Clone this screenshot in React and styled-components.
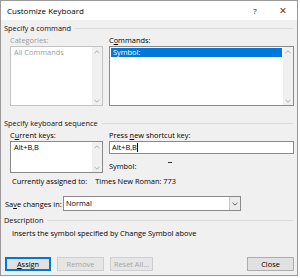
import React from 'react';
import styled, { createGlobalStyle } from 'styled-components';

const GlobalStyle = createGlobalStyle`
  html, body {
    margin: 0;
    padding: 0;
    background: #ffffff;
  }
  body {
    font-family: "Open Sans", "Noto Sans", sans-serif;
    font-size: 7.4px;
    color: #000;
  }
  * {
    box-sizing: border-box;
  }
`;

const Window = styled.div`
  width: 298px;
  height: 276px;
  border: 1px solid #9a9a9a;
  background: #f0f0f0;
  display: flex;
  flex-direction: column;
`;

const TitleBar = styled.div`
  height: 19px;
  background: #ffffff;
  display: flex;
  align-items: center;
  padding-left: 6px;
`;

const Title = styled.div`
  flex: 1;
  font-size: 8px;
  color: #000;
`;

const TitleButton = styled.div`
  width: 28px;
  text-align: center;
  font-size: ${props => props.big ? '12px' : '8px'};
  color: #222;
`;

const Body = styled.div`
  flex: 1;
  display: flex;
  flex-direction: column;
  padding: 0 3px 0 3px;
`;

const GroupHeader = styled.div`
  display: flex;
  align-items: center;
  gap: 4px;
  height: 10px;
  line-height: 10px;
  margin-top: ${props => props.top}px;
  padding-right: 1px;
  white-space: nowrap;
  color: #111;

  &::after {
    content: '';
    flex: 1;
    border-top: 1px solid #dadada;
  }
`;

const Columns = styled.div`
  display: flex;
  gap: 6px;
  padding-left: 6px;
  margin-top: ${props => props.top}px;
`;

const LeftColumn = styled.div`
  width: 93px;
  display: flex;
  flex-direction: column;
`;

const RightColumn = styled.div`
  flex: 1;
  display: flex;
  flex-direction: column;
`;

const Label = styled.div`
  height: 10px;
  line-height: 10px;
  color: ${props => props.disabled ? '#9d9d9d' : '#000'};
  margin-bottom: 1px;
  white-space: nowrap;

  u {
    text-decoration: underline;
    text-underline-offset: 1px;
  }
`;

const ListBox = styled.div`
  height: ${props => props.h}px;
  border: 1px solid ${props => props.disabled ? '#c4c4c4' : '#8a8a8a'};
  background: #ffffff;
  display: flex;
`;

const ListItems = styled.div`
  flex: 1;
  padding: 1px 1px;
`;

const ListItem = styled.div`
  height: 9px;
  line-height: 9px;
  padding-left: 2px;
  color: ${props => props.disabled ? '#9d9d9d' : props.selected ? '#fff' : '#000'};
  background: ${props => props.selected ? '#0078d7' : 'transparent'};
`;

const ScrollTrack = styled.div`
  width: 10px;
  background: #f0f0f0;
  display: flex;
  flex-direction: column;
  justify-content: space-between;
  align-items: center;
  padding: 3px 0 2px;
`;

const TextInput = styled.div`
  height: 13px;
  border: 1px solid #8a8a8a;
  background: #fff;
  line-height: 11px;
  padding-left: 2px;
  display: flex;
  align-items: center;
`;

const Caret = styled.span`
  display: inline-block;
  width: 1px;
  height: 9px;
  background: #000;
`;

const SymbolRow = styled.div`
  display: flex;
  align-items: flex-start;
  margin-top: 7px;
  height: 10px;
  line-height: 10px;
`;

const SymbolGlyph = styled.span`
  display: inline-block;
  width: 4px;
  height: 1px;
  background: #333;
  margin-left: 32px;
  margin-top: 1px;
`;

const InfoLine = styled.div`
  height: 10px;
  line-height: 10px;
  padding-left: 8px;
  margin-top: ${props => props.top}px;
  white-space: nowrap;
`;

const Gap = styled.span`
  display: inline-block;
  width: 8px;
`;

const SaveRow = styled.div`
  display: flex;
  align-items: center;
  margin-top: 10px;
  height: 15px;
`;

const SaveLabel = styled.div`
  width: 59px;
  padding-left: 1px;
  white-space: nowrap;

  u {
    text-decoration: underline;
    text-underline-offset: 1px;
  }
`;

const Select = styled.div`
  width: 178px;
  height: 15px;
  border: 1px solid #8a8a8a;
  background: #fff;
  display: flex;
  align-items: stretch;
`;

const SelectValue = styled.div`
  flex: 1;
  line-height: 13px;
  padding-left: 2px;
`;

const SelectButton = styled.div`
  width: 11px;
  border-left: 1px solid #c8c8c8;
  background: #ececec;
  display: flex;
  align-items: center;
  justify-content: center;
`;

const ButtonBar = styled.div`
  display: flex;
  margin-top: auto;
  margin-bottom: 4px;
  padding-left: 1px;
  gap: 6px;
`;

const Button = styled.div`
  width: ${props => props.w}px;
  height: 14px;
  line-height: ${props => props.focused ? '10px' : '12px'};
  text-align: center;
  background: ${props => props.disabled ? '#e6e6e6' : '#e1e1e1'};
  border: ${props => props.focused ? '2px solid #0078d7' : props.disabled ? '1px solid #cfcfcf' : '1px solid #adadad'};
  color: ${props => props.disabled ? '#a3a3a3' : '#000'};
  margin-left: ${props => props.push ? 'auto' : '0'};

  u {
    text-decoration: underline;
    text-underline-offset: 1px;
  }
`;

function Chevron({ down, color = '#a8a8a8' }) {
  return (
    <svg width="6" height="4" viewBox="0 0 6 4">
      <path
        d={down ? 'M0.5 0.8 L3 3.2 L5.5 0.8' : 'M0.5 3.2 L3 0.8 L5.5 3.2'}
        fill="none"
        stroke={color}
        strokeWidth="0.9"
      />
    </svg>
  );
}

function Scroll() {
  return (
    <ScrollTrack>
      <Chevron />
      <Chevron down />
    </ScrollTrack>
  );
}

export default function App() {
  return (
    <>
      <GlobalStyle />
      <Window>
        <TitleBar>
          <Title>Customize Keyboard</Title>
          <TitleButton>?</TitleButton>
          <TitleButton big>×</TitleButton>
        </TitleBar>
        <Body>
          <GroupHeader top={3}>Specify a command</GroupHeader>
          <Columns top={2}>
            <LeftColumn>
              <Label disabled>Categories:</Label>
              <ListBox h={60} disabled>
                <ListItems>
                  <ListItem disabled>All Commands</ListItem>
                </ListItems>
                <Scroll />
              </ListBox>
            </LeftColumn>
            <RightColumn>
              <Label>C<u>o</u>mmands:</Label>
              <ListBox h={60}>
                <ListItems>
                  <ListItem selected>Symbol:</ListItem>
                </ListItems>
                <Scroll />
              </ListBox>
            </RightColumn>
          </Columns>
          <GroupHeader top={12}>Specify keyboard sequence</GroupHeader>
          <Columns top={2}>
            <LeftColumn>
              <Label>C<u>u</u>rrent keys:</Label>
              <ListBox h={32}>
                <ListItems>
                  <ListItem>Alt+B,B</ListItem>
                </ListItems>
                <Scroll />
              </ListBox>
            </LeftColumn>
            <RightColumn>
              <Label>Press <u>n</u>ew shortcut key:</Label>
              <TextInput>
                Alt+B,B<Caret />
              </TextInput>
              <SymbolRow>
                Symbol:<SymbolGlyph />
              </SymbolRow>
            </RightColumn>
          </Columns>
          <InfoLine top={3}>
            Currently assigned to:<Gap />Times New Roman: 773
          </InfoLine>
          <SaveRow>
            <SaveLabel>Sa<u>v</u>e changes in:</SaveLabel>
            <Select>
              <SelectValue>Normal</SelectValue>
              <SelectButton>
                <Chevron down color="#555" />
              </SelectButton>
            </Select>
          </SaveRow>
          <GroupHeader top={4}>Description</GroupHeader>
          <InfoLine top={3}>Inserts the symbol specified by Change Symbol above</InfoLine>
          <ButtonBar>
            <Button w={46} focused><u>A</u>ssign</Button>
            <Button w={47} disabled>Remove</Button>
            <Button w={43} disabled>Reset All...</Button>
            <Button w={47} push>Close</Button>
          </ButtonBar>
        </Body>
      </Window>
    </>
  );
}
